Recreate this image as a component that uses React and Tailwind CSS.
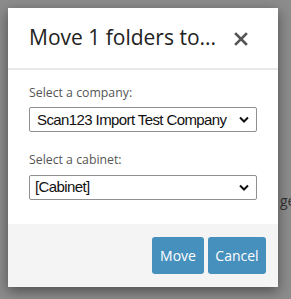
export default function App() {
  return (
    <div className="relative h-[299px] w-[291px] overflow-hidden bg-[#8c8c8c] font-['Open_Sans',sans-serif]">
      <span className="absolute left-[280px] top-[190px] text-[14px] text-[#333]">ge</span>
      <div className="absolute left-[8px] top-[8px] flex w-[270px] flex-col bg-white shadow-[0_4px_12px_rgba(0,0,0,0.45)]">
        <div className="flex h-[62px] items-center justify-between border-b-2 border-[#e8e8e8] pl-[21px] pr-[30px]">
          <h1 className="text-[21px] text-[#222]">Move 1 folders to...</h1>
          <svg width="14" height="14" viewBox="0 0 14 14" className="mt-[2px]">
            <path d="M2 2 L12 12 M12 2 L2 12" stroke="#555" strokeWidth="2.6" strokeLinecap="square" />
          </svg>
        </div>
        <div className="flex h-[154px] flex-col px-[21px] pt-[14px]">
          <label className="text-[12.3px] text-[#555]">Select a company:</label>
          <div className="mt-[5px] flex h-[25px] items-center justify-between rounded-[2px] border border-[#909090] pl-[7px] pr-[7px] font-['Liberation_Sans',sans-serif] text-[15px] tracking-[-0.6px] text-[#111]">
            <span className="whitespace-nowrap">Scan123 Import Test Company</span>
            <Chevron />
          </div>
          <label className="mt-[19px] text-[12.3px] text-[#555]">Select a cabinet:</label>
          <div className="mt-[5px] flex h-[25px] items-center justify-between rounded-[2px] border border-[#909090] pl-[5px] pr-[7px] font-['Liberation_Sans',sans-serif] text-[15px] tracking-[-0.6px] text-[#111]">
            <span className="whitespace-nowrap">[Cabinet]</span>
            <Chevron />
          </div>
        </div>
        <div className="flex h-[63px] items-center justify-end gap-[4px] bg-[#f4f4f4] pr-[12px]">
          <button className="h-[37px] w-[52px] rounded-[3px] bg-[#4690bd] text-[14px] text-white">Move</button>
          <button className="h-[37px] w-[58px] rounded-[3px] bg-[#4690bd] text-[14px] text-white">Cancel</button>
        </div>
      </div>
    </div>
  );
}

function Chevron() {
  return (
    <svg width="10" height="7" viewBox="0 0 10 7">
      <path d="M1 1.5 L5 5.5 L9 1.5" fill="none" stroke="#111" strokeWidth="2" />
    </svg>
  );
}
